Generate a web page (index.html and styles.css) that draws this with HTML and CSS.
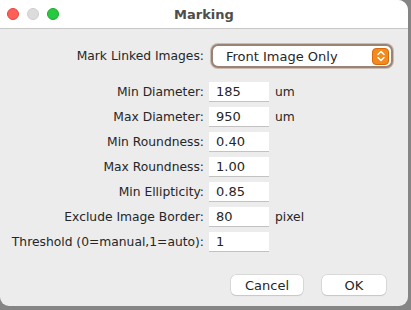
FILE: index.html
```html
<!DOCTYPE html>
<html lang="en">
<head>
<meta charset="UTF-8">
<title>Marking</title>
<link rel="stylesheet" href="styles.css">
</head>
<body>
<div class="window">
    <div class="titlebar">
        <div class="lights">
            <span class="light red"></span>
            <span class="light grey"></span>
            <span class="light green"></span>
        </div>
        <div class="title">Marking</div>
    </div>
    <div class="content">
        <div class="select-row">
            <label class="label">Mark Linked Images:</label>
            <div class="select">
                <span>Front Image Only</span>
                <span class="stepper">
                    <svg width="10" height="12" viewBox="0 0 10 12">
                        <path d="M2 4.5 L5 1.5 L8 4.5 M2 7.5 L5 10.5 L8 7.5" fill="none" stroke="#fff" stroke-width="1.5" stroke-linecap="round" stroke-linejoin="round"/>
                    </svg>
                </span>
            </div>
        </div>
        <div class="fields">
            <label class="label">Min Diameter:</label>
            <div class="field">185</div>
            <span class="unit">um</span>

            <label class="label">Max Diameter:</label>
            <div class="field">950</div>
            <span class="unit">um</span>

            <label class="label">Min Roundness:</label>
            <div class="field">0.40</div>
            <span class="unit"></span>

            <label class="label">Max Roundness:</label>
            <div class="field">1.00</div>
            <span class="unit"></span>

            <label class="label">Min Ellipticity:</label>
            <div class="field">0.85</div>
            <span class="unit"></span>

            <label class="label">Exclude Image Border:</label>
            <div class="field">80</div>
            <span class="unit">pixel</span>

            <label class="label">Threshold (0=manual,1=auto):</label>
            <div class="field">1</div>
            <span class="unit"></span>
        </div>
        <div class="buttons">
            <button class="button">Cancel</button>
            <button class="button">OK</button>
        </div>
    </div>
</div>
</body>
</html>
```

FILE: styles.css
```css
body {
    margin: 0;
    background-color: #858585;
    font-family: 'DejaVu Sans', Verdana, sans-serif;
    font-size: 12.3px;
    color: #262626;
}
.window {
    width: 408px;
    height: 306px;
    background-color: #ececec;
    border-radius: 0 10px 9px 9px;
    overflow: hidden;
}
.titlebar {
    height: 28px;
    background-color: #fff;
    border-bottom: 1px solid #c8c8c8;
    display: flex;
    align-items: center;
    position: relative;
}
.lights {
    display: flex;
    gap: 8px;
    padding-left: 7px;
}
.light {
    width: 12px;
    height: 12px;
    border-radius: 50%;
    box-sizing: border-box;
}
.red {
    background-color: #fe5f57;
    border: 1px solid #e2463f;
}
.grey {
    background-color: #dcdcdc;
    border: 1px solid #cdcdcd;
}
.green {
    background-color: #28c840;
    border: 1px solid #1aab29;
}
.title {
    position: absolute;
    left: 0;
    right: 0;
    text-align: center;
    font-weight: bold;
    font-size: 13px;
    color: #4d4d4d;
}
.content {
    padding: 15px 0 0 8px;
}
.select-row {
    display: flex;
    align-items: center;
}
.label {
    width: 196px;
    text-align: right;
}
.select {
    margin-left: 7px;
    width: 163px;
    height: 20px;
    border: 2px solid #9a8374;
    border-radius: 7px;
    background-color: #fff;
    display: flex;
    align-items: center;
    justify-content: space-between;
    padding-left: 13px;
    padding-right: 2px;
    box-sizing: content-box;
    box-shadow: 0 0 0 1px #c9bcb2;
    font-size: 13px;
}
.stepper {
    width: 17px;
    height: 17px;
    border-radius: 4px;
    background-color: #f28a1e;
    border: 1px solid #d86a0a;
    box-sizing: border-box;
    display: flex;
    align-items: center;
    justify-content: center;
}
.fields {
    display: grid;
    grid-template-columns: 196px 60px auto;
    grid-auto-rows: 20px;
    column-gap: 5px;
    row-gap: 5px;
    align-items: center;
    margin-top: 14px;
}
.field {
    height: 20px;
    line-height: 20px;
    background-color: #fff;
    border-bottom: 1px solid #c2c2c2;
    box-sizing: border-box;
    padding-left: 7px;
    font-size: 13px;
}
.unit {
    padding-left: 1px;
}
.buttons {
    display: flex;
    justify-content: flex-end;
    gap: 19px;
    margin-top: 23px;
    padding-right: 22px;
}
.button {
    height: 20px;
    background-color: #fff;
    border: none;
    border-radius: 5px;
    box-shadow: 0 0 0 0.5px #c6c6c6, 0 1px 1px rgba(0,0,0,0.15);
    font-family: inherit;
    font-size: 13px;
    color: #262626;
    padding: 0;
}
.button:first-child {
    width: 72px;
}
.button:last-child {
    width: 64px;
}
```
